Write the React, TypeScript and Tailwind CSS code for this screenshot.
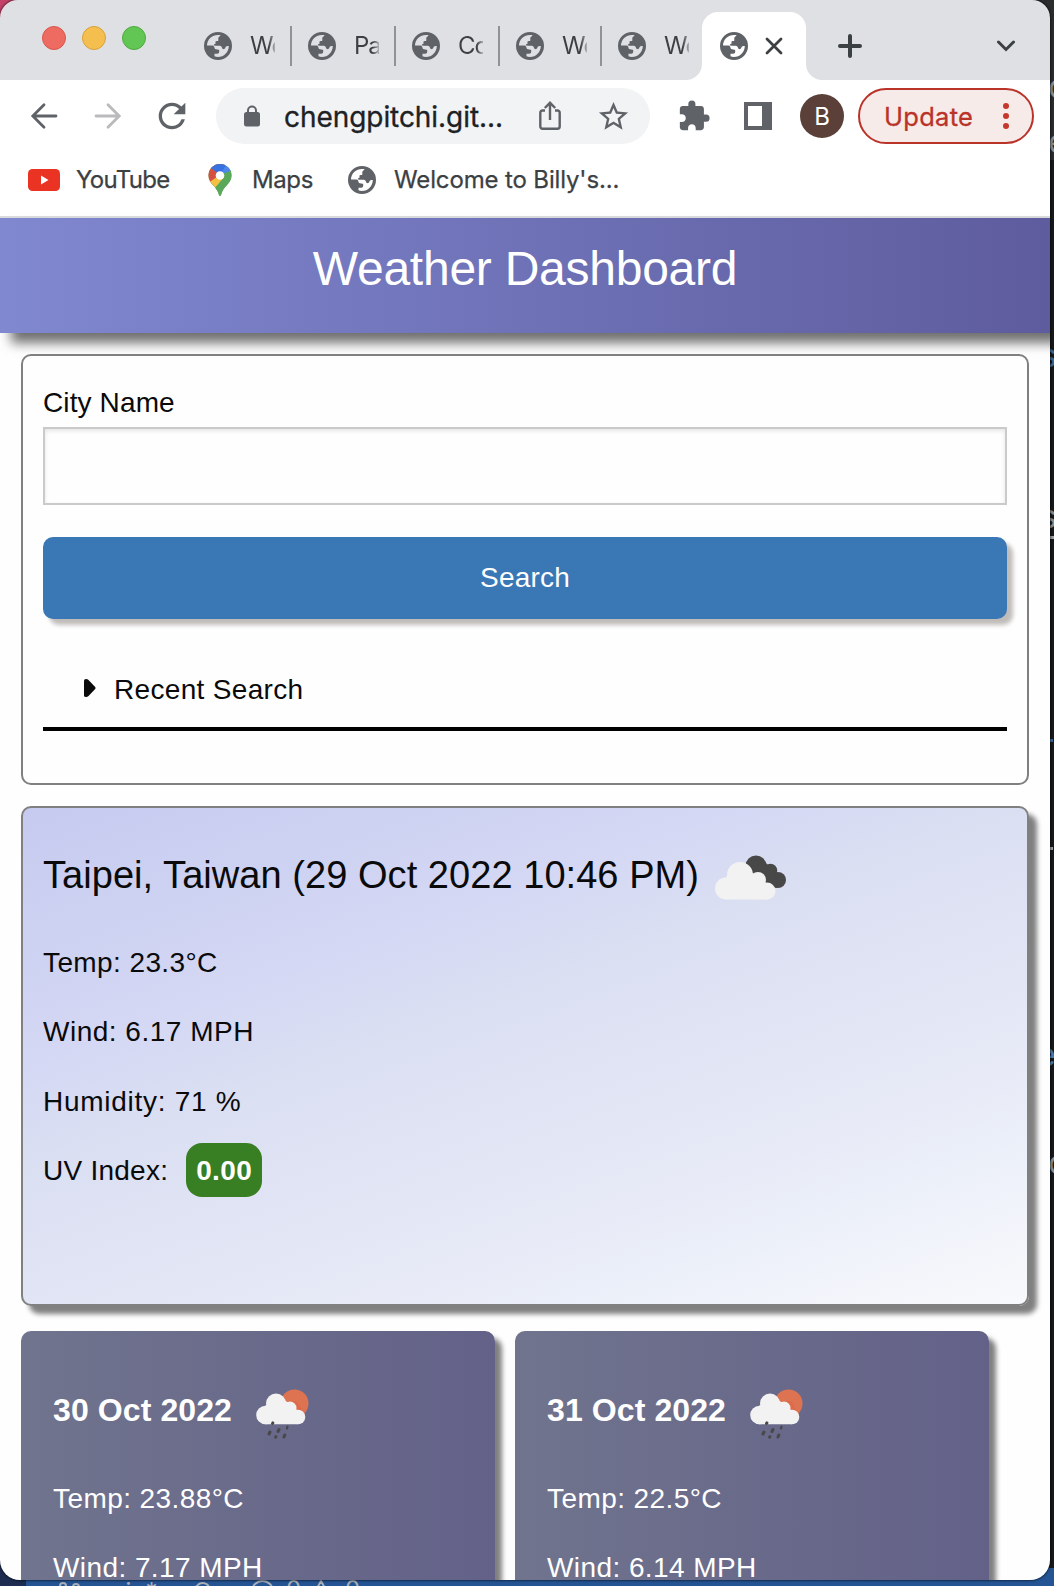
import React from "react";
import { MdExtension, MdRefresh, MdStarBorder } from "react-icons/md";

function Globe() {
  return (
    <svg className="size-7 shrink-0" viewBox="0 0 28 28">
      <path
        fill="#5f6368"
        fillRule="evenodd"
        d="M14 0a14 14 0 1 1 0 28a14 14 0 1 1 0-28zM3 13.6C3 7.6 8 3 14 3c1 0 1.900.1 2.700.3-.6.800-2 1.300-2.400 2.700v2.700c-.9.300-2.500 0-2.800.8v2.300c-1 .3-1.700.6-1.700 1.800 2.500.200 5.400-.2 6.900.3 1.500.6 1.300 2.700 2.100 3.200.9.400 2.400-.2 2.600-1.500.3-1.500 1.600-1.600 3.400-1.600C24.800 20.200 19.800 25 14 25c-1.400 0-2.500-.3-3.500-.7v-2.600h2.700c1.200 0 2-.9 2-2 0-.8.300-1.600-.6-2-2-.7-3.600-.2-4-1.500-.4-1.500-.6-2.500-2.200-2.600z"
      />
    </svg>
  );
}

function BackArrow({ flip }: { flip?: boolean }) {
  return (
    <svg
      className={flip ? "h-7 w-7 -scale-x-100 text-[#bababd]" : "h-7 w-7 text-[#5f6368]"}
      viewBox="0 0 28 28"
      fill="none"
      stroke="currentColor"
      strokeWidth="2.800"
      strokeLinecap="round"
      strokeLinejoin="miter"
    >
      <path d="M26 14H3M14 2.800L2.800 14L14 25.200" />
    </svg>
  );
}

function BrokenClouds() {
  return (
    <svg className="ml-4 h-[46px] w-[71px]" viewBox="0 0 71 46">
      <g fill="#484848">
        <circle cx="41" cy="11" r="10.500" />
        <circle cx="55.500" cy="15.500" r="6.800" />
        <circle cx="63" cy="25" r="8" />
        <path d="M34 14L49 6L60 17L62 33L48 30z" />
      </g>
      <g fill="#f2f2f2">
        <circle cx="25" cy="20" r="13" />
        <circle cx="11" cy="33.500" r="11" />
        <circle cx="43" cy="25" r="8" />
        <circle cx="52" cy="36" r="8.500" />
        <path d="M11 22L25 14L43 20L53 30L53 44.500H11z" />
      </g>
    </svg>
  );
}

function RainIcon() {
  return (
    <svg className="mt-1 ml-6 h-[51px] w-[53px]" viewBox="0 0 53 51">
      <circle cx="38.500" cy="14.500" r="14" fill="#dd7350" />
      <path d="M27 12L41 12L49 26L44 30L30 24z" fill="#dd6a49" />
      <g fill="#f2f2f2">
        <circle cx="20" cy="14.500" r="10" />
        <circle cx="9.500" cy="26" r="9.300" />
        <circle cx="34" cy="19" r="6.500" />
        <circle cx="42" cy="28" r="7.300" />
        <path d="M9 17L20 8L34 14L43 23L42 35.300H9z" />
      </g>
      <g stroke="#484848" strokeWidth="3" strokeLinecap="round">
        <path d="M16.500 34.500l.4-.6M14 43l-1 2M23 40.500l-1 2M19.800 47.700l-.2.500M28.800 46l-.8 2" />
        <path d="M31.500 37.500l-.5 2" strokeWidth="2.200" />
      </g>
    </svg>
  );
}

const tabs = [
  { label: "We", width: "w-[104px]", gap: "ml-[15px]", divider: true },
  { label: "Pa", width: "w-[104px]", gap: "ml-[15px]", divider: true },
  { label: "Co", width: "w-[104px]", gap: "ml-[15px]", divider: true },
  { label: "We", width: "w-[102px]", gap: "ml-[13px]", divider: true },
  { label: "We", width: "w-[84px]", gap: "", divider: false },
];

function TabStrip() {
  return (
    <div className="flex h-20 shrink-0 bg-[#dfe0e4]">
      <div className="ml-[42px] flex h-[76px] w-[162px] shrink-0 items-center gap-4">
        <span className="size-6 rounded-full border border-[#d8564b] bg-[#ed6b60]" />
        <span className="size-6 rounded-full border border-[#d9a13c] bg-[#f5bf4f]" />
        <span className="size-6 rounded-full border border-[#4faa3e] bg-[#61c654]" />
      </div>
      {tabs.map((t, i) => (
        <div key={i} className={`flex h-[80px] shrink-0 items-center pt-3 ${t.width}`}>
          <Globe />
          <span className="ml-[18px] w-[25px] overflow-hidden bg-gradient-to-r from-[#3c4043] from-75% to-transparent to-110% bg-clip-text text-2xl tracking-[-1px] text-transparent">
            {t.label}
          </span>
          {t.divider && <span className={`h-10 w-0.5 bg-[#909296] ${t.gap}`} />}
        </div>
      ))}
      <div className="relative mt-3 flex h-[68px] w-[104px] shrink-0 items-center rounded-t-2xl bg-white pl-[18px]">
        <svg className="absolute bottom-0 -left-4 size-4" viewBox="0 0 16 16">
          <path d="M16 0V16H0A16 16 0 0 0 16 0z" fill="#fff" />
        </svg>
        <svg className="absolute -right-4 bottom-0 size-4" viewBox="0 0 16 16">
          <path d="M0 0V16H16A16 16 0 0 1 0 0z" fill="#fff" />
        </svg>
        <Globe />
        <svg className="ml-[17px] size-[18px]" viewBox="0 0 18 18" stroke="#3c4043" strokeWidth="2.800" strokeLinecap="round">
          <path d="M2 2L16 16M16 2L2 16" />
        </svg>
      </div>
      <svg className="mt-[34px] ml-8 size-6" viewBox="0 0 24 24" stroke="#3c4043" strokeWidth="4" strokeLinecap="round">
        <path d="M12 2V22M2 12H22" />
      </svg>
      <svg className="mt-10 ml-[134px] h-3 w-5" viewBox="0 0 20 12" fill="none" stroke="#3c4043" strokeWidth="3" strokeLinecap="round">
        <path d="M2.500 2L10 9.500L17.500 2" />
      </svg>
    </div>
  );
}

function Toolbar() {
  return (
    <div className="flex h-[72px] shrink-0 items-center bg-white pl-[30px]">
      <BackArrow />
      <div className="ml-9">
        <BackArrow flip />
      </div>
      <MdRefresh className="ml-[30px] size-10 text-[#5f6368]" />
      <div className="ml-6 flex h-14 w-[434px] shrink-0 items-center rounded-full bg-[#f1f3f4]">
        <svg className="ml-7 h-[22px] w-4 shrink-0" viewBox="0 0 16 22">
          <rect x="0" y="7" width="16" height="14.500" rx="2.500" fill="#5f6368" />
          <path d="M4 8V5.500a4 4 0 0 1 8 0V8" fill="none" stroke="#5f6368" strokeWidth="2" />
        </svg>
        <span className="ml-6 w-[230px] pt-0.5 text-[28px] tracking-[-0.06px] whitespace-nowrap text-[#202124] [-webkit-text-stroke:0.3px_#202124]">chengpitchi.git...</span>
        <svg className="ml-[25px] h-[30px] w-[22px] shrink-0" viewBox="0 0 22 30" fill="none" stroke="#5f6368" strokeWidth="2.400">
          <path d="M6 9.500H3.500A2.200 2.200 0 0 0 1.300 11.700V25.500A2.200 2.200 0 0 0 3.500 27.700H18.500A2.200 2.200 0 0 0 20.700 25.500V11.700A2.200 2.200 0 0 0 18.500 9.500H16M11 19V2.500M5.800 7L11 1.800L16.200 7" />
        </svg>
        <MdStarBorder className="ml-[35px] size-[35px] shrink-0 text-[#5f6368]" />
      </div>
      <MdExtension className="ml-[27px] size-[34px] shrink-0 text-[#5f6368]" />
      <span className="ml-[33px] size-7 shrink-0 border-4 border-r-[10px] border-[#5f6368]" />
      <span className="ml-7 flex size-11 shrink-0 items-center justify-center rounded-full bg-[#5a4038] pt-px text-[24px] text-white">B</span>
      <div className="ml-3.5 flex h-14 w-[176px] shrink-0 items-center rounded-full border-2 border-[#b93329] bg-[#f7ebea] pl-[24px]">
        <span className="w-[92px] pt-0.5 text-[25.500px] tracking-[0.3px] whitespace-nowrap text-[#b93329] [-webkit-text-stroke:0.3px_#b93329]">Update</span>
        <span className="ml-[27px] flex flex-col gap-1">
          <i className="size-1.5 rounded-full bg-[#c5382c]" />
          <i className="size-1.5 rounded-full bg-[#c5382c]" />
          <i className="size-1.5 rounded-full bg-[#c5382c]" />
        </span>
      </div>
    </div>
  );
}

function Bookmarks() {
  return (
    <div className="flex h-[66px] shrink-0 items-center border-b-2 border-[#dadbdd] bg-white pb-2 pl-7 text-2xl whitespace-nowrap text-[#3c4043] [-webkit-text-stroke:0.25px_#3c4043]">
      <svg className="h-[22px] w-8 shrink-0" viewBox="0 0 32 22">
        <rect width="32" height="22" rx="4.500" fill="#ea3323" />
        <path d="M13 6.500V15.500L20.500 11z" fill="#fff" />
      </svg>
      <span className="ml-4 w-[132px] tracking-[-0.7px]">YouTube</span>
      <svg className="h-8 w-6 shrink-0" viewBox="0 0 24 32">
        <defs>
          <clipPath id="pin">
            <path d="M12 0A11.500 11.500 0 0 1 23.500 11.500C23.500 20 15 22 13 31Q12 33 11 31C9 22 .5 20 .5 11.500A11.500 11.500 0 0 1 12 0z" />
          </clipPath>
        </defs>
        <g clipPath="url(#pin)">
          <rect width="24" height="32" fill="#59a85b" />
          <path d="M0 0H17L12 11L4 20L0 20z" fill="#d5503f" />
          <path d="M3 4L12 11L19 2L17-1H5z" fill="#3871e0" />
          <path d="M18 1L12 11L24 7V0z" fill="#4f86ec" />
          <path d="M12 10L1 22L8 27L24 7z" fill="#59a85b" />
          <path d="M12 11L1.500 18L6 25L17 14z" fill="#f2c142" />
          <path d="M23 5L6 25L13 34L26 18z" fill="#59a85b" />
        </g>
        <circle cx="12" cy="11.500" r="4.300" fill="#fff" />
      </svg>
      <span className="ml-5 w-24 tracking-[-0.4px]">Maps</span>
      <Globe />
      <span className="ml-[18px] tracking-[-0.14px]">Welcome to Billy&#39;s...</span>
    </div>
  );
}

function Forecast({ date, temp, wind }: { date: string; temp: string; wind: string }) {
  return (
    <div className="h-[280px] w-[474px] shrink-0 rounded-[10px] bg-gradient-to-r from-[#70748d] to-[#636188] px-8 pt-[52px] text-white shadow-[7px_7px_5px_#808080]">
      <div className="flex h-[58px] items-center">
        <h3 className="-mt-1 w-[179px] text-[32px] font-bold tracking-[0.1px] whitespace-nowrap">{date}</h3>
        <RainIcon />
      </div>
      <p className="mt-[41px] text-[28px] leading-[34px] tracking-[0.42px]">Temp: {temp}°C</p>
      <p className="mt-[35px] text-[28px] leading-[34px] tracking-[0.42px]">Wind: {wind} MPH</p>
    </div>
  );
}

function Dashboard() {
  return (
    <main className="flex-1 bg-[#fefefe] font-['Liberation_Sans',Arial,sans-serif] text-[#0a0a0a]">
      <header className="relative flex h-[115px] items-center justify-center bg-gradient-to-r from-[#8088d0] to-[#5e5c9e] pb-3.5 text-white shadow-[11px_10px_11px_#707070]">
        <h1 className="text-[48px] leading-none tracking-[-0.25px] whitespace-nowrap">Weather Dashboard</h1>
      </header>
      <section className="mx-[21px] mt-[21px] h-[431px] rounded-[10px] border-2 border-[#808080] px-5 pt-[29px]">
        <label className="block h-[42px] text-[28px] leading-9 tracking-[0.12px]">City Name</label>
        <div className="h-[78px] border-2 border-[#cacaca] bg-[#fefefe] shadow-[inset_0_2px_4px_rgba(10,10,10,0.1)]" />
        <button className="mt-8 block h-[82px] w-full rounded-[10px] bg-[#3a78b5] text-[28px] tracking-[0.2px] text-[#fefefe] shadow-[6px_6px_4px_#c0bcba]">Search</button>
        <div className="mt-12 flex h-16 items-start border-b-4 border-black pl-[41px]">
          <svg className="mt-3 h-[18px] w-3" viewBox="0 0 12 18">
            <path d="M0 1.500Q0 0 2 0Q3.500 0 4.500 1L11.200 8Q12 9 11.200 10L4.500 17Q3.500 18 2 18Q0 18 0 16.500z" fill="#0a0a0a" />
          </svg>
          <span className="ml-[18px] text-[28px] leading-[46px] tracking-[0.33px]">Recent Search</span>
        </div>
      </section>
      <section className="mx-[21px] mt-[21px] h-[500px] rounded-[10px] border-2 border-[#808080] bg-[linear-gradient(160deg,#c6caef_0%,#d4d8f4_30%,#dadff2_42%,#e4e7f5_65%,#ecf0f9_82%,#f8f9fb_100%)] px-5 shadow-[8px_8px_5px_#808080]">
        <div className="flex h-[138px] items-center pt-0.5">
          <h2 className="-mt-1.5 w-[656px] text-[38px] tracking-[0.05px] whitespace-nowrap">Taipei, Taiwan (29 Oct 2022 10:46 PM)</h2>
          <BrokenClouds />
        </div>
        <div className="flex flex-col gap-[35px] text-[28px] leading-[34.400px]">
          <p className="tracking-[0.4px]">Temp: 23.3°C</p>
          <p className="tracking-[0.5px]">Wind: 6.17 MPH</p>
          <p className="tracking-[0.72px]">Humidity: 71 %</p>
          <div className="-mt-px flex h-[34px] items-center">
            <span className="pt-0.5 tracking-[0.25px]">UV Index:</span>
            <span className="ml-[18px] flex h-[54px] w-[76px] shrink-0 items-center justify-center rounded-2xl bg-[#387e22] pt-0.5 font-bold tracking-[0.4px] text-white">0.00</span>
          </div>
        </div>
      </section>
      <div className="mt-[25px] ml-[21px] flex gap-5">
        <Forecast date="30 Oct 2022" temp="23.88" wind="7.17" />
        <Forecast date="31 Oct 2022" temp="22.5" wind="6.14" />
      </div>
    </main>
  );
}

export default function App() {
  return (
    <div className="relative flex h-[1586px] w-[1054px] flex-col overflow-hidden bg-[#16181a] font-[Inter,sans-serif]">
      {/* Editor window that peeks out behind the browser */}
      <div className="absolute inset-0 overflow-hidden text-[32px] leading-none text-[#8a8d90]">
        <div className="absolute top-0 left-0 size-10 bg-[#c4426a]" />
        <div className="absolute top-0 right-0 h-[160px] w-10 bg-[#2b2c2e]" />
        <span className="absolute top-[71px] left-[1048px]">c</span>
        <span className="absolute top-[126px] left-[1048px]">e</span>
        <span className="absolute top-[340px] left-[1040px] text-[#3c6896]">s</span>
        <span className="absolute top-[501px] left-[1040px]">s</span>
        <div className="absolute top-[536px] left-[1049px] h-[3px] w-5 bg-[#a0a2a4]" />
        <div className="absolute top-[739px] left-[1049px] h-[3px] w-1 bg-[#3c6896]" />
        <div className="absolute top-[847px] left-[1049px] h-[3px] w-1 bg-[#a0a2a4]" />
        <span className="absolute top-[1039px] left-[1037px] text-[#4b7fb5]">e</span>
        <span className="absolute top-[1147px] left-[1048px]">c</span>
        <div className="absolute inset-x-0 bottom-0 h-[18px] bg-[#245493]" />
        <div className="absolute bottom-0 left-0 h-10 w-[26px] bg-[#1d2c50]" />
        <div className="absolute top-[1580px] left-[59px] flex items-start text-2xl leading-6 text-[#a9afb8]">
          <svg className="mt-0.5 mr-2.5 h-6 w-[22px]" viewBox="0 0 22 24" fill="none" stroke="currentColor" strokeWidth="2">
            <circle cx="4" cy="4" r="3" />
            <circle cx="17" cy="5" r="3" />
            <path d="M4 7V20M17 8Q17 14 4 14" />
          </svg>
          <span className="w-[100px]">main*</span>
          <svg className="mt-px mr-9 h-5 w-6" viewBox="0 0 24 20" fill="none" stroke="currentColor" strokeWidth="2">
            <path d="M4 14A6 6 0 0 1 6 5A7 7 0 0 1 18 6A5 5 0 0 1 19 15z" />
          </svg>
          <svg className="mr-3 size-[23px]" viewBox="0 0 23 23" fill="none" stroke="currentColor" strokeWidth="2">
            <circle cx="11.500" cy="11.500" r="10.500" />
            <path d="M7 7L16 16M16 7L7 16" />
          </svg>
          <span className="-mt-0.5 w-[23px]">0</span>
          <svg className="mr-3 h-[22px] w-6" viewBox="0 0 24 22" fill="none" stroke="currentColor" strokeWidth="2">
            <path d="M12 1L23 21H1z" />
          </svg>
          <span className="-mt-0.5">0</span>
        </div>
      </div>
      <div className="relative flex h-[1580px] w-[1050px] flex-col overflow-hidden rounded-t-[18px] rounded-b-[20px] shadow-[0_0_3px_#000]">
        <TabStrip />
        <Toolbar />
        <Bookmarks />
        <Dashboard />
      </div>
    </div>
  );
}
